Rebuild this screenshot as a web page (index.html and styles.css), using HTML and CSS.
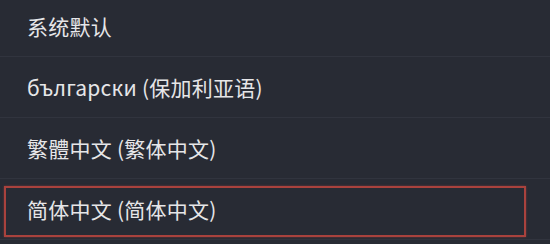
FILE: index.html
```html
<!DOCTYPE html>
<html lang="zh-CN">
<head>
<meta charset="utf-8">
<link rel="stylesheet" href="styles.css">
</head>
<body>
<ul class="lang-list">
  <li class="lang-item">系统默认</li>
  <li class="lang-item">български (保加利亚语)</li>
  <li class="lang-item">繁體中文 (繁体中文)</li>
  <li class="lang-item selected">简体中文 (简体中文)</li>
</ul>
</body>
</html>
```
FILE: styles.css
```css
html, body {
  margin: 0;
  padding: 0;
  background: #282b34;
  width: 550px;
  height: 244px;
  overflow: hidden;
}
.lang-list {
  list-style: none;
  margin: -4px 0 0 0;
  padding: 0;
}
.lang-item {
  position: relative;
  height: 60px;
  display: flex;
  align-items: center;
  padding-left: 27px;
  border-bottom: 1px solid #31343e;
  color: #e6e6e8;
  font-family: "Noto Sans CJK SC", sans-serif;
  font-size: 21px;
  letter-spacing: 0.25px;
}
.selected::after {
  content: "";
  position: absolute;
  left: 4px;
  right: 24px;
  top: 7px;
  bottom: 2px;
  border: 2px solid #a9423d;
  box-shadow: 0 0 2px rgba(169, 66, 61, 0.6);
}
```
